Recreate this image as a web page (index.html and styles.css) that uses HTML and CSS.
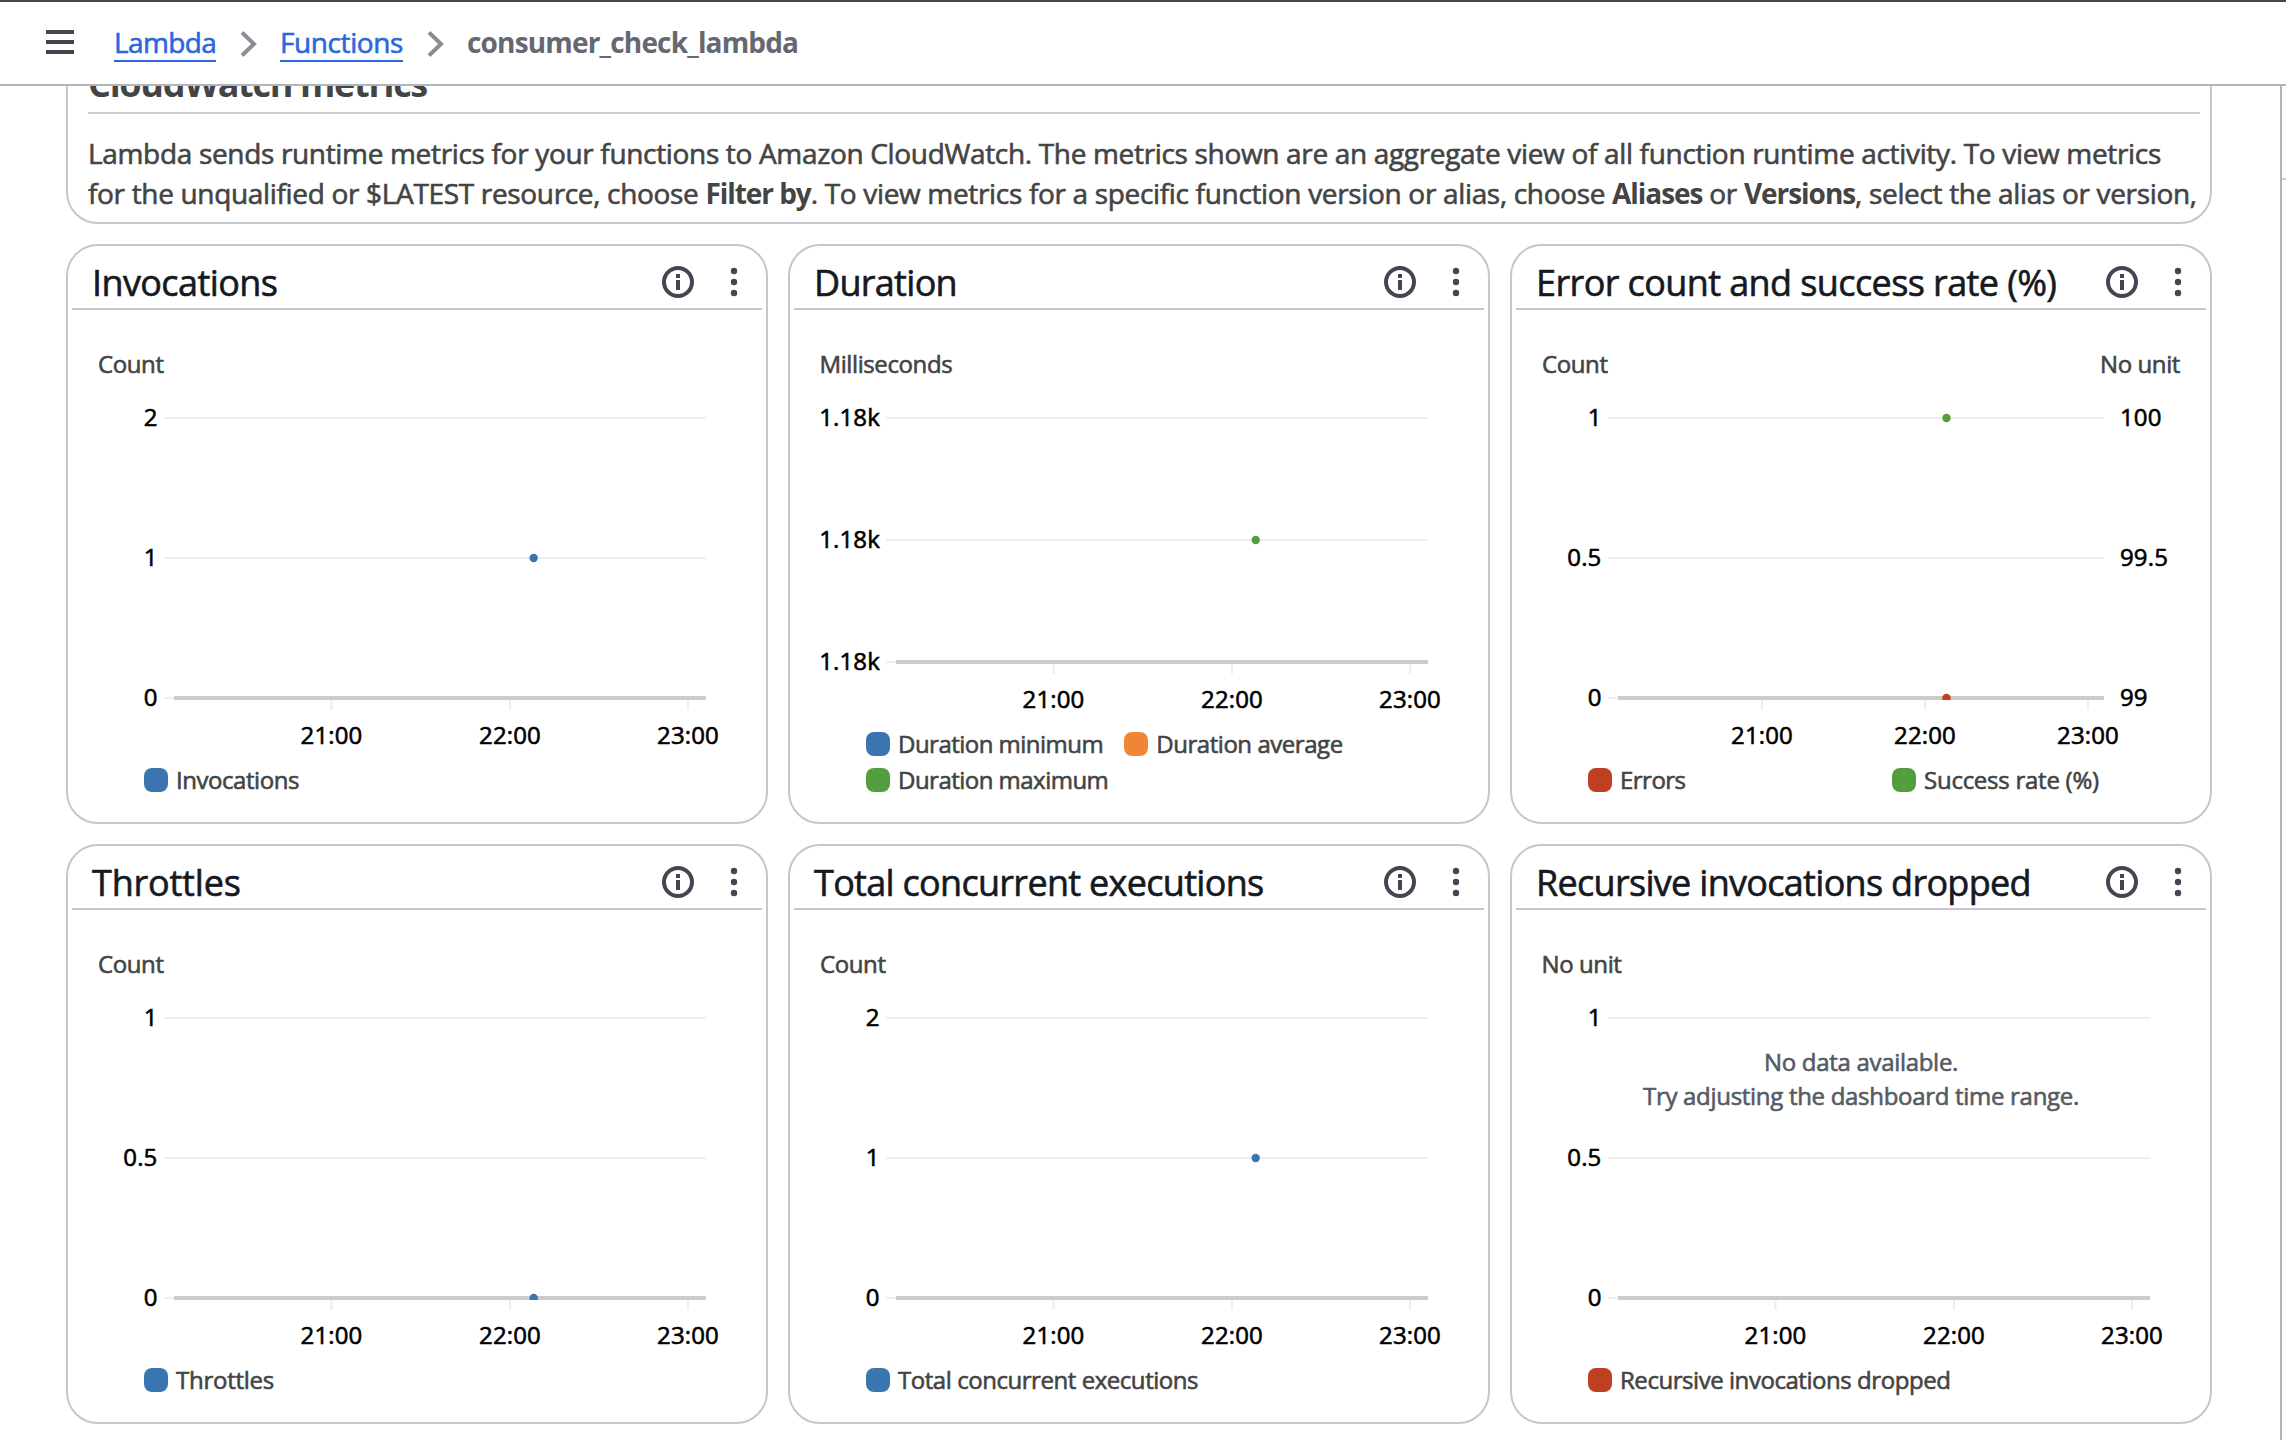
FILE: index.html
```
<!DOCTYPE html>
<html lang="en">
<head>
<meta charset="utf-8">
<title>consumer_check_lambda</title>
<link rel="stylesheet" href="styles.css">
</head>
<body>
<svg class="defs" width="0" height="0" aria-hidden="true">
  <symbol id="info" viewBox="0 0 32 32">
    <circle cx="16" cy="16" r="14" fill="none" stroke="#424650" stroke-width="4"/>
    <rect x="14" y="8" width="4" height="4" fill="#424650"/>
    <rect x="14" y="14" width="4" height="10" fill="#424650"/>
  </symbol>
  <symbol id="dots" viewBox="0 0 8 32">
    <circle cx="4" cy="5" r="3.2" fill="#424650"/>
    <circle cx="4" cy="16" r="3.2" fill="#424650"/>
    <circle cx="4" cy="27" r="3.2" fill="#424650"/>
  </symbol>
  <symbol id="chevron" viewBox="0 0 18 28">
    <path d="M2 2.5 L14 14 L2 25.5" fill="none" stroke="#8c8c94" stroke-width="4"/>
  </symbol>
</svg>

<header class="topbar">
  <svg class="burger" width="28" height="24" viewBox="0 0 28 24"><path d="M0 2H28M0 12H28M0 22H28" stroke="#424650" stroke-width="4"/></svg>
  <nav class="crumbs">
    <a class="crumb crumb-lambda">Lambda</a>
    <svg class="chev" width="18" height="28"><use href="#chevron"/></svg>
    <a class="crumb crumb-functions">Functions</a>
    <svg class="chev" width="18" height="28"><use href="#chevron"/></svg>
    <span class="current">consumer_check_lambda</span>
  </nav>
</header>

<div class="page">
  <main class="main">
    <section class="intro">
      <h2 class="intro-title">CloudWatch metrics</h2>
      <p class="intro-text">Lambda sends runtime metrics for your functions to Amazon CloudWatch. The metrics shown are an aggregate view of all function runtime activity. To view metrics<br>for the unqualified or $LATEST resource, choose <b>Filter by</b>. To view metrics for a specific function version or alias, choose <b>Aliases</b> or <b>Versions</b>, select the alias or version,</p>
    </section>

    <div class="grid">
      <section class="card">
        <div class="card-head"><h3 class="card-title title-loose">Invocations</h3><svg width="32" height="32"><use href="#info"/></svg><svg width="8" height="32"><use href="#dots"/></svg></div>
        <svg class="chart" width="698" height="450" viewBox="2 66 698 450">
          <text class="unit" x="32" y="129">Count</text>
          <path class="gridline" d="M98 174H640M98 314H640M98 454H108"/>
          <path class="tick" d="M265.5 456V466M444 456V466M622 456V466"/>
          <path class="axis" d="M108 454H640"/>
          <circle cx="467.7" cy="314" r="4.2" fill="#3b75b0"/>
          <text class="lbl end" x="91.5" y="182">2</text><text class="lbl end" x="91.5" y="322">1</text><text class="lbl end" x="91.5" y="462">0</text>
          <text class="lbl mid" x="265.5" y="500">21:00</text><text class="lbl mid" x="444" y="500">22:00</text><text class="lbl mid" x="622" y="500">23:00</text>
        </svg>
        <div class="legend"><span class="key"><i class="sw blue"></i>Invocations</span></div>
      </section>

      <section class="card">
        <div class="card-head"><h3 class="card-title">Duration</h3><svg width="32" height="32"><use href="#info"/></svg><svg width="8" height="32"><use href="#dots"/></svg></div>
        <svg class="chart" width="698" height="414" viewBox="2 66 698 414">
          <text class="unit" x="31.5" y="129">Milliseconds</text>
          <path class="gridline" d="M98 174H640M98 296H640M98 418H108"/>
          <path class="tick" d="M265.5 420V430M444 420V430M622 420V430"/>
          <path class="axis" d="M108 418H640"/>
          <circle cx="467.7" cy="296" r="4.2" fill="#529e3f"/>
          <text class="lbl end" x="92" y="182">1.18k</text><text class="lbl end" x="92" y="304">1.18k</text><text class="lbl end" x="92" y="426">1.18k</text>
          <text class="lbl mid" x="265.5" y="464">21:00</text><text class="lbl mid" x="444" y="464">22:00</text><text class="lbl mid" x="622" y="464">23:00</text>
        </svg>
        <div class="legend"><span class="key key-tight"><i class="sw blue"></i>Duration minimum</span><span class="key"><i class="sw orange"></i>Duration average</span><span class="key key-tight"><i class="sw green"></i>Duration maximum</span></div>
      </section>

      <section class="card">
        <div class="card-head"><h3 class="card-title title-error">Error count and success rate (%)</h3><svg width="32" height="32"><use href="#info"/></svg><svg width="8" height="32"><use href="#dots"/></svg></div>
        <svg class="chart" width="698" height="450" viewBox="2 66 698 450">
          <text class="unit" x="32" y="129">Count</text><text class="unit end" x="670" y="129">No unit</text>
          <path class="gridline" d="M98 174H594M98 314H594M98 454H108"/>
          <path class="tick" d="M252 456V466M415 456V466M578 456V466"/>
          <path class="axis" d="M108 454H594"/>
          <circle cx="436.5" cy="174" r="4.2" fill="#529e3f"/>
          <path d="M432.3 456V454a4.2 4.2 0 0 1 8.4 0V456Z" fill="#bf3f23"/>
          <text class="lbl end" x="91.5" y="182">1</text><text class="lbl end" x="91.5" y="322">0.5</text><text class="lbl end" x="91.5" y="462">0</text>
          <text class="lbl" x="610" y="182">100</text><text class="lbl" x="610" y="322">99.5</text><text class="lbl" x="610" y="462">99</text>
          <text class="lbl mid" x="252" y="500">21:00</text><text class="lbl mid" x="415" y="500">22:00</text><text class="lbl mid" x="578" y="500">23:00</text>
        </svg>
        <div class="legend legend-split"><span class="key key-tight"><i class="sw red"></i>Errors</span><span class="key key-loose"><i class="sw green"></i>Success rate (%)</span></div>
      </section>

      <section class="card">
        <div class="card-head"><h3 class="card-title title-wide">Throttles</h3><svg width="32" height="32"><use href="#info"/></svg><svg width="8" height="32"><use href="#dots"/></svg></div>
        <svg class="chart" width="698" height="450" viewBox="2 66 698 450">
          <text class="unit" x="32" y="129">Count</text>
          <path class="gridline" d="M98 174H640M98 314H640M98 454H108"/>
          <path class="tick" d="M265.5 456V466M444 456V466M622 456V466"/>
          <path class="axis" d="M108 454H640"/>
          <path d="M463.5 456V454a4.2 4.2 0 0 1 8.4 0V456Z" fill="#3b75b0"/>
          <text class="lbl end" x="91.5" y="182">1</text><text class="lbl end" x="91.5" y="322">0.5</text><text class="lbl end" x="91.5" y="462">0</text>
          <text class="lbl mid" x="265.5" y="500">21:00</text><text class="lbl mid" x="444" y="500">22:00</text><text class="lbl mid" x="622" y="500">23:00</text>
        </svg>
        <div class="legend"><span class="key key-loose"><i class="sw blue"></i>Throttles</span></div>
      </section>

      <section class="card">
        <div class="card-head"><h3 class="card-title">Total concurrent executions</h3><svg width="32" height="32"><use href="#info"/></svg><svg width="8" height="32"><use href="#dots"/></svg></div>
        <svg class="chart" width="698" height="450" viewBox="2 66 698 450">
          <text class="unit" x="32" y="129">Count</text>
          <path class="gridline" d="M98 174H640M98 314H640M98 454H108"/>
          <path class="tick" d="M265.5 456V466M444 456V466M622 456V466"/>
          <path class="axis" d="M108 454H640"/>
          <circle cx="467.7" cy="314" r="4.2" fill="#3b75b0"/>
          <text class="lbl end" x="91.5" y="182">2</text><text class="lbl end" x="91.5" y="322">1</text><text class="lbl end" x="91.5" y="462">0</text>
          <text class="lbl mid" x="265.5" y="500">21:00</text><text class="lbl mid" x="444" y="500">22:00</text><text class="lbl mid" x="622" y="500">23:00</text>
        </svg>
        <div class="legend"><span class="key"><i class="sw blue"></i>Total concurrent executions</span></div>
      </section>

      <section class="card">
        <div class="card-head"><h3 class="card-title">Recursive invocations dropped</h3><svg width="32" height="32"><use href="#info"/></svg><svg width="8" height="32"><use href="#dots"/></svg></div>
        <svg class="chart" width="698" height="450" viewBox="2 66 698 450">
          <text class="unit" x="31.5" y="129">No unit</text>
          <path class="gridline" d="M98 174H640M98 314H640M98 454H108"/>
          <path class="tick" d="M265.5 456V466M444 456V466M622 456V466"/>
          <path class="axis" d="M108 454H640"/>
          <text class="lbl end" x="91.5" y="182">1</text><text class="lbl end" x="91.5" y="322">0.5</text><text class="lbl end" x="91.5" y="462">0</text>
          <text class="lbl mid" x="265.5" y="500">21:00</text><text class="lbl mid" x="444" y="500">22:00</text><text class="lbl mid" x="622" y="500">23:00</text>
          <text class="empty" x="351" y="227">No data available.</text>
          <text class="empty" x="351" y="261">Try adjusting the dashboard time range.</text>
        </svg>
        <div class="legend"><span class="key"><i class="sw red"></i>Recursive invocations dropped</span></div>
      </section>
    </div>
  </main>
  <aside class="rail"><div class="rail-top"></div></aside>
</div>
</body>
</html>
```
FILE: styles.css
```
* { box-sizing: border-box; }
body {
  margin: 0;
  height: 1440px;
  overflow: hidden;
  display: flex;
  flex-direction: column;
  background: #fff;
  font-family: "Open Sans", "Noto Sans", sans-serif;
  -webkit-text-stroke: 0.6px;
}
.defs { position: absolute; }

.topbar {
  flex: none;
  height: 86px;
  border-top: 2px solid #424650;
  border-bottom: 2px solid #b4b4bb;
  padding: 20px 0 0 46px;
  display: flex;
  align-items: flex-start;
}
.burger { margin-top: 8px; }
.crumbs { display: flex; margin-left: 40px; font-size: 28px; line-height: 40px; }
.crumb { height: 40px; border-bottom: 2px solid #2b67dc; color: #2b67dc; white-space: nowrap; }
.crumb-lambda { width: 102px; letter-spacing: -0.6px; }
.crumb-functions { width: 123px; letter-spacing: -0.4px; }
.chev { margin: 8px 22px 0 24px; }
.current { color: #656871; font-weight: 700; letter-spacing: -0.83px; -webkit-text-stroke: 0; }

.page { flex: 1; min-height: 0; display: flex; overflow: hidden; }
.main { flex: 1; padding: 0 68px 0 66px; }
.intro {
  height: 178px;
  margin-top: -40px;
  padding: 12px 10px 0 20px;
  border: 2px solid #c6c6cd;
  border-radius: 32px;
  color: #444;
}
.intro-title {
  height: 54px;
  margin: 0;
  border-bottom: 2px solid #ccc;
  font-size: 36px;
  line-height: 48px;
  font-weight: 700;
  letter-spacing: -1.3px;
  -webkit-text-stroke: 0;
}
.intro-text { margin: 19px -10px 0 0; font-size: 28px; line-height: 40px; letter-spacing: -0.33px; white-space: nowrap; }
.intro-text b { letter-spacing: -1.05px; -webkit-text-stroke: 0; }

.grid { display: grid; grid-template-columns: repeat(3, 702px); grid-auto-rows: 580px; gap: 20px; margin-top: 20px; }
.card { border: 2px solid #c6c6cd; border-radius: 32px; }
.card-head {
  height: 64px;
  margin: 0 4px;
  padding: 20px 24px 0 20px;
  border-bottom: 2px solid #c6c6cd;
  display: flex;
  gap: 36px;
}
.card-title {
  flex: 1;
  margin: -5px 0 0;
  font-size: 36px;
  line-height: 44px;
  font-weight: 400;
  letter-spacing: -0.7px;
  color: #16191f;
  white-space: nowrap;
}
.title-loose { letter-spacing: -0.6px; }
.title-error { letter-spacing: -0.6px; }
.title-wide { letter-spacing: -0.2px; }
.chart { display: block; }
.chart text { font-size: 24px; stroke-width: 0.6px; }
.unit { fill: #444; stroke: #444; letter-spacing: -0.4px; }
.lbl { fill: #000; stroke: #000; letter-spacing: 0.15px; }
.end { text-anchor: end; }
.mid { text-anchor: middle; }
.empty { fill: #545b64; stroke: #545b64; text-anchor: middle; letter-spacing: -0.3px; }
.gridline { stroke: #eee; stroke-width: 2; fill: none; }
.tick { stroke: #eee; stroke-width: 2; }
.axis { stroke: #ccc; stroke-width: 4; }

.legend { display: flex; flex-wrap: wrap; gap: 12px 21px; padding: 8px 60px 0 76px; }
.legend-split { display: grid; grid-template-columns: 304px auto; gap: 0; }
.key { display: flex; gap: 8px; height: 24px; font-size: 24px; line-height: 24px; letter-spacing: -0.45px; color: #444; white-space: nowrap; }
.key-tight { letter-spacing: -0.52px; }
.key-loose { letter-spacing: -0.25px; }
.sw { width: 24px; height: 24px; border-radius: 8px; }
.blue { background: #3b75b0; }
.orange { background: #ef8636; }
.green { background: #529e3f; }
.red { background: #bf3f23; }

.rail { width: 6px; border-left: 2px solid #b4b4bb; }
.rail-top { height: 94px; border-bottom: 2px solid #ccc; }
```
